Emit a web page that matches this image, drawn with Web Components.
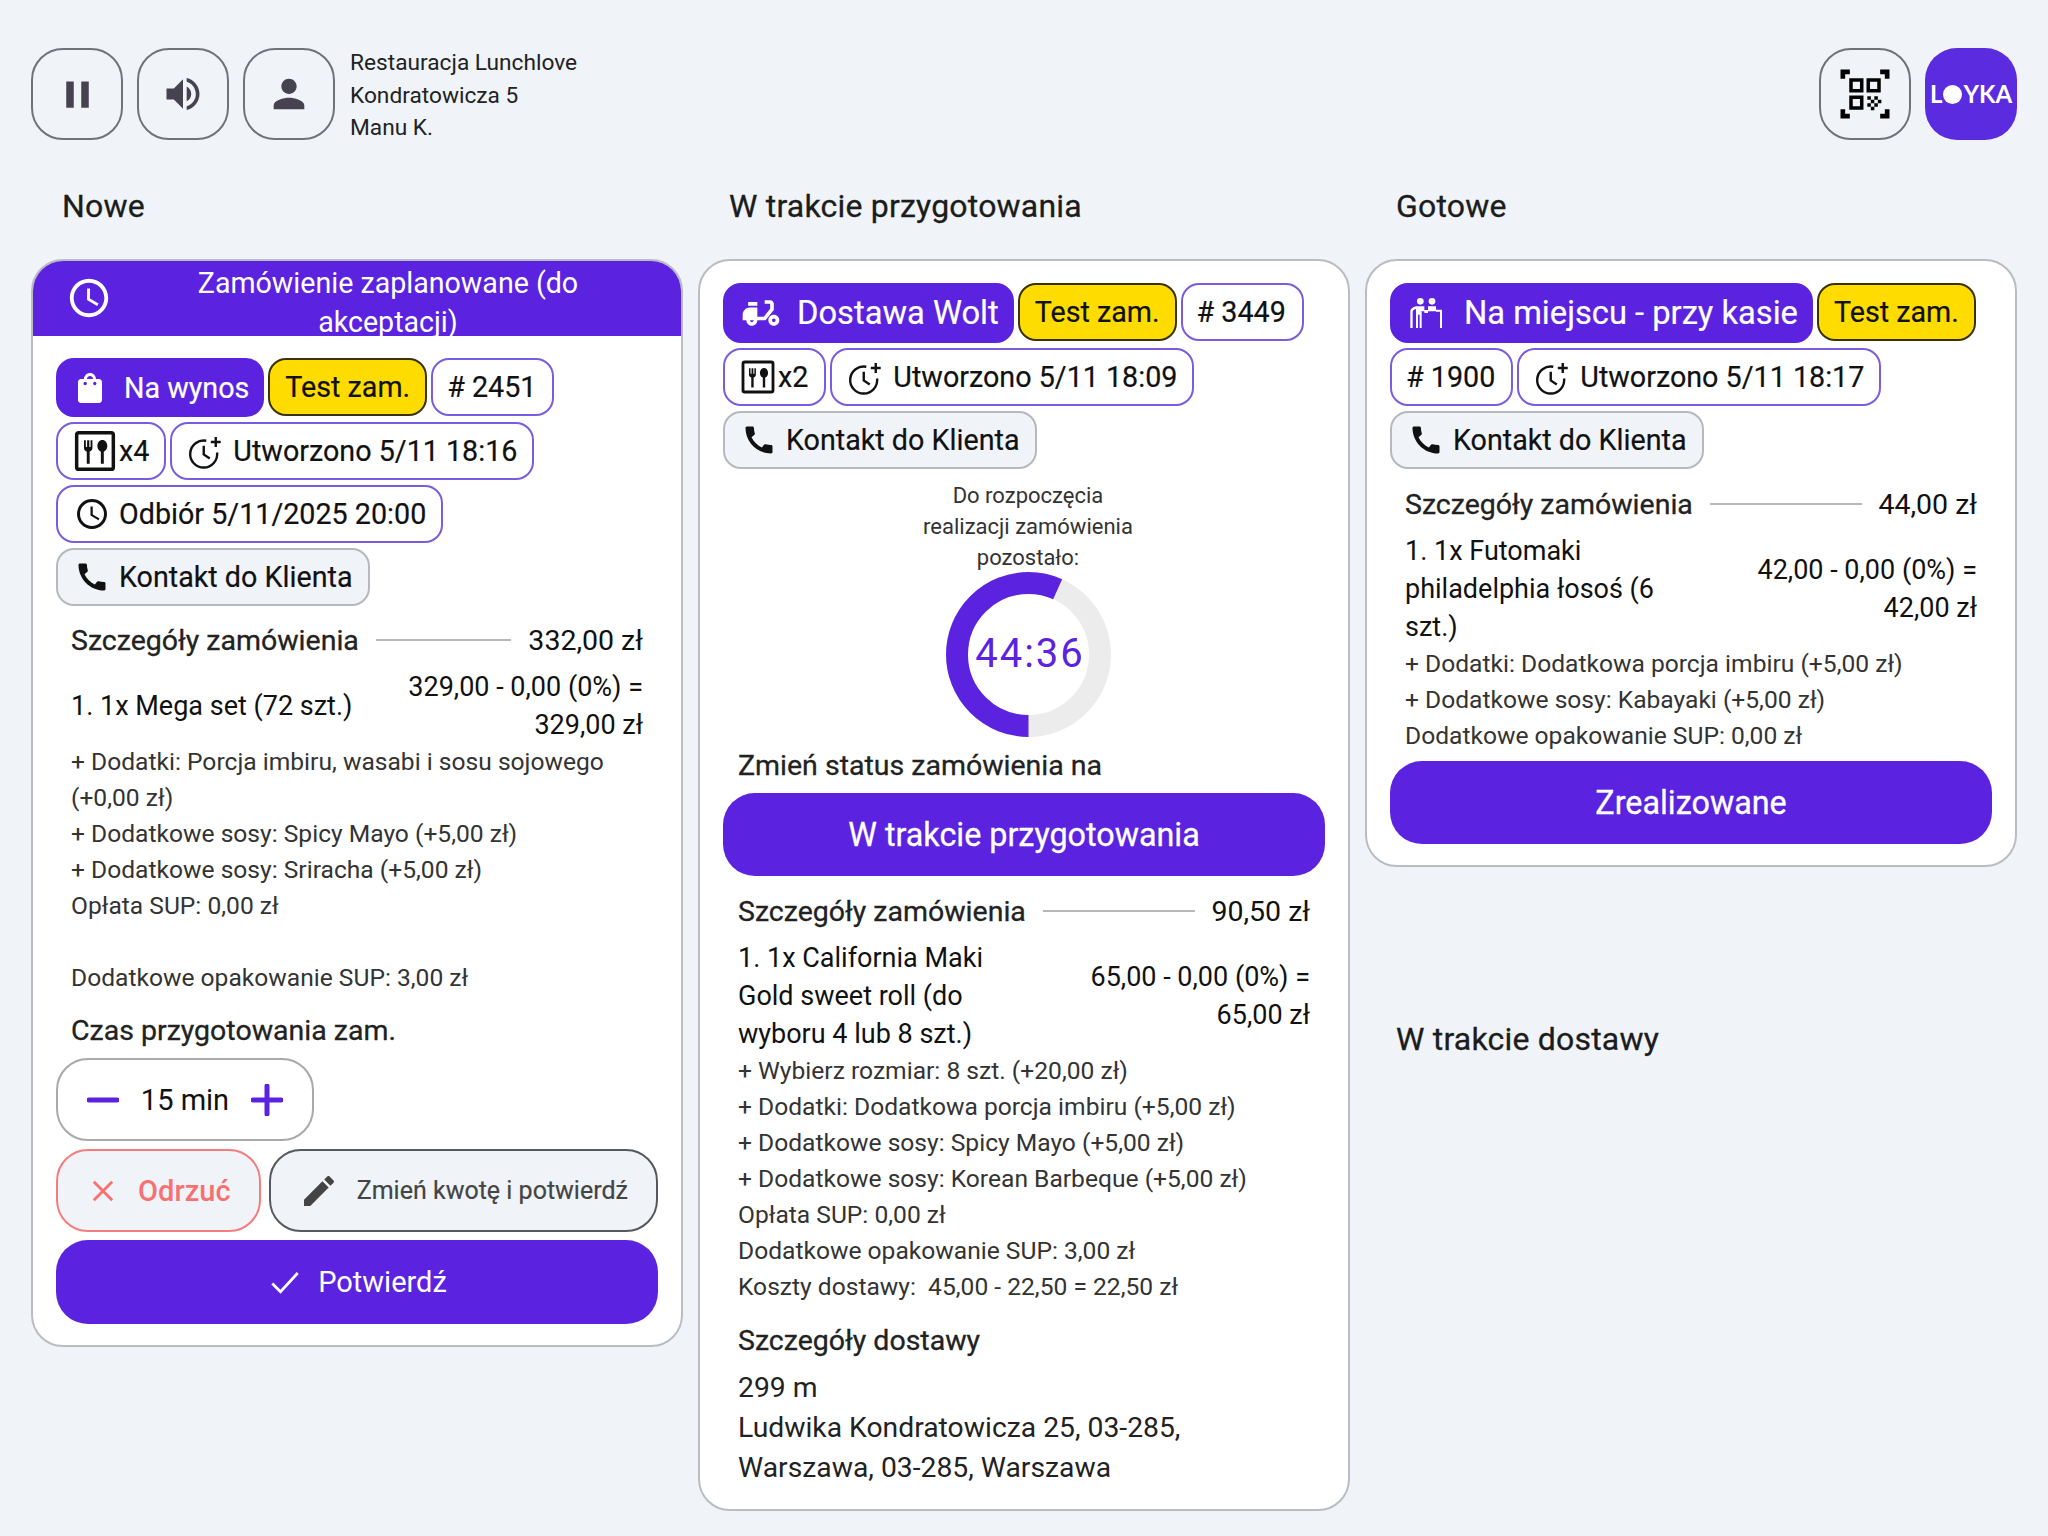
<!DOCTYPE html>
<html lang="pl">
<head>
<meta charset="utf-8">
<title>Zamówienia</title>
<style>
  html, body { margin: 0; background: #f0f4f9; }
  body { font-family: Roboto, "Noto Sans", sans-serif; color: #111; width: 2048px; height: 1536px; overflow: hidden; }
</style>
</head>
<body>
<order-board>
  <top-bar slot="top" lines="Restauracja Lunchlove|Kondratowicza 5|Manu K."></top-bar>

  <board-column slot="col1" title="Nowe">
    <order-card banner="Zamówienie zaplanowane (do akceptacji)">
      <order-badge kind="primary" icon="bag">Na wynos</order-badge>
      <order-badge kind="test">Test zam.</order-badge>
      <order-badge number># 2451</order-badge>
      <order-badge icon="tray" compact>x4</order-badge>
      <order-badge icon="clockplus">Utworzono 5/11 18:16</order-badge>
      <order-badge icon="clock">Odbiór 5/11/2025 20:00</order-badge>
      <order-badge kind="contact" icon="call">Kontakt do Klienta</order-badge>
      <order-details slot="body" total="332,00 zł" rule="135" style="margin-top:14px">
        <order-item name="1. 1x Mega set (72 szt.)" price="329,00 - 0,00 (0%) = 329,00 zł"></order-item>
        <order-note>+ Dodatki: Porcja imbiru, wasabi i sosu sojowego (+0,00 zł)</order-note>
        <order-note>+ Dodatkowe sosy: Spicy Mayo (+5,00 zł)</order-note>
        <order-note>+ Dodatkowe sosy: Sriracha (+5,00 zł)</order-note>
        <order-note>Opłata SUP: 0,00 zł</order-note>
        <order-note gap>Dodatkowe opakowanie SUP: 3,00 zł</order-note>
      </order-details>
      <section-label slot="body" style="margin-top:15px">Czas przygotowania zam.</section-label>
      <time-stepper slot="body" value="15 min"></time-stepper>
      <div slot="body" style="display:flex;gap:8px;margin-top:8px">
        <action-button kind="reject" icon="close" iconsize="34" style="width:205px;gap:18px">Odrzuć</action-button>
        <action-button kind="edit" icon="edit" iconsize="40" style="width:390px">Zmień kwotę i potwierdź</action-button>
      </div>
      <action-button slot="body" kind="main" icon="check" style="margin-top:8px;gap:15px">Potwierdź</action-button>
    </order-card>
  </board-column>

  <board-column slot="col2" title="W trakcie przygotowania">
    <order-card>
      <order-badge kind="primary" icon="moped" wide style="gap:14px">Dostawa Wolt</order-badge>
      <order-badge kind="test">Test zam.</order-badge>
      <order-badge number># 3449</order-badge>
      <order-badge icon="tray" iconsize="36" compact style="padding-right:16px">x2</order-badge>
      <order-badge icon="clockplus">Utworzono 5/11 18:09</order-badge>
      <order-badge kind="contact" icon="call">Kontakt do Klienta</order-badge>
      <count-down slot="body" time="44:36" label="Do rozpoczęcia realizacji zamówienia pozostało:"></count-down>
      <section-label slot="body" style="margin-top:9px">Zmień status zamówienia na</section-label>
      <action-button slot="body" kind="main" strong style="margin-top:7px">W trakcie przygotowania</action-button>
      <order-details slot="body" total="90,50 zł" rule="152" style="margin-top:15px">
        <order-item name="1. 1x California Maki Gold sweet roll (do wyboru 4 lub 8 szt.)" price="65,00 - 0,00 (0%) = 65,00 zł"></order-item>
        <order-note>+ Wybierz rozmiar: 8 szt. (+20,00 zł)</order-note>
        <order-note>+ Dodatki: Dodatkowa porcja imbiru (+5,00 zł)</order-note>
        <order-note>+ Dodatkowe sosy: Spicy Mayo (+5,00 zł)</order-note>
        <order-note>+ Dodatkowe sosy: Korean Barbeque (+5,00 zł)</order-note>
        <order-note>Opłata SUP: 0,00 zł</order-note>
        <order-note>Dodatkowe opakowanie SUP: 3,00 zł</order-note>
        <order-note>Koszty dostawy:&nbsp; 45,00 - 22,50 = 22,50 zł</order-note>
      </order-details>
      <section-label slot="body" style="margin-top:16px">Szczegóły dostawy</section-label>
      <delivery-info slot="body">299 m<br>Ludwika Kondratowicza 25, 03-285,<br>Warszawa, 03-285, Warszawa</delivery-info>
    </order-card>
  </board-column>

  <board-column slot="col3" title="Gotowe">
    <order-card>
      <order-badge kind="primary" icon="people" wide>Na miejscu - przy kasie</order-badge>
      <order-badge kind="test">Test zam.</order-badge>
      <order-badge number># 1900</order-badge>
      <order-badge icon="clockplus">Utworzono 5/11 18:17</order-badge>
      <order-badge kind="contact" icon="call">Kontakt do Klienta</order-badge>
      <order-details slot="body" total="44,00 zł" rule="152" style="margin-top:15px">
        <order-item name="1. 1x Futomaki philadelphia łosoś (6 szt.)" price="42,00 - 0,00 (0%) = 42,00 zł"></order-item>
        <order-note>+ Dodatki: Dodatkowa porcja imbiru (+5,00 zł)</order-note>
        <order-note>+ Dodatkowe sosy: Kabayaki (+5,00 zł)</order-note>
        <order-note>Dodatkowe opakowanie SUP: 0,00 zł</order-note>
      </order-details>
      <action-button slot="body" kind="main" strong style="margin-top:7px">Zrealizowane</action-button>
    </order-card>
    <column-title style="margin-top:152px">W trakcie dostawy</column-title>
  </board-column>
</order-board>

<script>
// material style paths, 24x24 box
var ICONS = {
  pause: '<path d="M6 19h4V5H6v14zm8-14v14h4V5h-4z"/>',
  sound: '<path d="M3 9v6h4l5 5V4L7 9H3zm13.5 3c0-1.77-1.02-3.29-2.5-4.03v8.05c1.48-.73 2.5-2.25 2.5-4.02z"/><path d="M14 3.23v2.06c2.89.86 5 3.54 5 6.71s-2.11 5.85-5 6.71v2.06c4.01-.91 7-4.49 7-8.77s-2.99-7.86-7-8.77z"/>',
  person: '<path d="M12 12c2.21 0 4-1.79 4-4s-1.79-4-4-4-4 1.79-4 4 1.79 4 4 4zm0 2c-2.67 0-8 1.34-8 4v2h16v-2c0-2.66-5.33-4-8-4z"/>',
  call: '<path d="M20.01 15.38c-1.23 0-2.42-.2-3.53-.56a.977.977 0 00-1.01.24l-1.57 1.97c-2.83-1.35-5.48-3.9-6.89-6.83l1.95-1.66c.27-.28.35-.67.24-1.02-.37-1.11-.56-2.3-.56-3.53 0-.54-.45-.99-.99-.99H4.19C3.65 3 3 3.24 3 3.99 3 13.28 10.73 21 20.01 21c.71 0 .99-.63.99-1.18v-3.45c0-.54-.45-.99-.99-.99z"/>',
  clock: '<path d="M11.99 2C6.47 2 2 6.48 2 12s4.47 10 9.99 10C17.52 22 22 17.52 22 12S17.52 2 11.99 2zM12 20c-4.42 0-8-3.58-8-8s3.58-8 8-8 8 3.58 8 8-3.58 8-8 8z"/><path d="M12.5 7H11v6l5.25 3.15.75-1.23-4.5-2.67z"/>',
  clockplus: '<g fill="none" stroke="currentColor" stroke-width="1.6"><path d="M12.2 5.200A9 9 0 1 0 19.400 13"/><path d="M10.500 8.500V14.300l4 2.700"/><path d="M18.500 2.700v6.600M15.200 6h6.600"/></g>',
  edit: '<path d="M3 17.25V21h3.75L17.81 9.94l-3.75-3.75L3 17.25zM20.71 7.04c.39-.39.39-1.02 0-1.41l-2.34-2.34c-.39-.39-1.02-.39-1.41 0l-1.83 1.83 3.75 3.75 1.83-1.83z"/>',
  close: '<path d="M5.500 5.500l13 13M18.500 5.500l-13 13" fill="none" stroke="currentColor" stroke-width="2"/>',
  check: '<path d="M3.500 13l5.500 5.500L20.500 6" fill="none" stroke="currentColor" stroke-width="1.8"/>',
  bag: '<path d="M18 6h-2c0-2.21-1.79-4-4-4S8 3.79 8 6H6c-1.1 0-2 .9-2 2v12c0 1.1.9 2 2 2h12c1.1 0 2-.9 2-2V8c0-1.1-.9-2-2-2zm-6-2c1.1 0 2 .9 2 2h-4c0-1.1.9-2 2-2z"/><circle cx="8.800" cy="9" r="1.100" fill="#5b23e0"/><circle cx="15.200" cy="9" r="1.100" fill="#5b23e0"/>',
  moped: '<path d="M19 7c0-1.1-.9-2-2-2h-3v2h3v2.65L13.52 14H10V9H6c-2.21 0-4 1.79-4 4v3h2c0 1.66 1.34 3 3 3s3-1.34 3-3h4.48L19 10.35V7zM7 17c-.55 0-1-.45-1-1h2c0 .55-.45 1-1 1z"/><path d="M5 6h5v2H5z"/><path d="M19 13c-1.66 0-3 1.34-3 3s1.34 3 3 3 3-1.34 3-3-1.34-3-3-3zm0 4c-.55 0-1-.45-1-1s.45-1 1-1 1 .45 1 1-.45 1-1 1z"/>',
  people: '<circle cx="8.600" cy="5" r="2"/><circle cx="15.600" cy="5" r="2"/><path d="M6 8h5v2.200h2.200V8H18v3h-4.800v1H11v-1H6z"/><path d="M6 8v13h1.200v-8h1v8h1.200V11h-1z"/><path d="M2.600 11.400c0-1.700.9-2.600 3.400-3.400v1.600c-1.400.4-2 .9-2 1.800V21H2.600zM18 10h3.600v11h-1.200V11.200H18z"/>',
  tray: '<rect x="2" y="2" width="20" height="20" rx="1.200" fill="none" stroke="currentColor" stroke-width="1.900"/><path d="M6 6.200v4.200c0 1 .6 1.700 1.500 1.900V19h1.600v-6.700c.9-.2 1.500-.9 1.500-1.900V6.200H9.600v3.600h-.7V6.200H7.700v3.600H7V6.200z"/><path d="M16 6c-1.600 0-2.700 1.500-2.700 3.300 0 1.500.8 2.700 1.900 3.100V19h1.600v-6.600c1.100-.4 1.900-1.600 1.900-3.100C18.700 7.500 17.600 6 16 6z"/>',
  qr: '<g fill="none" stroke="currentColor" stroke-width="1.500"><path d="M5.500 2.500h-3v3M18.500 2.500h3v3M5.500 21.500h-3v-3M18.500 21.500h3v-3" stroke-width="2"/><rect x="6" y="6" width="4.600" height="4.600"/><rect x="13.400" y="6" width="4.600" height="4.600"/><rect x="6" y="13.400" width="4.600" height="4.600"/></g><path d="M13 13h1.500v1.500H13zM16 13h1.500v1.500H16zM14.500 14.500H16V16h-1.500zM17.500 14.500H19V16h-1.500zM13 16h1.500v1.500H13zM16 16h1.500v1.500H16zM14.500 17.500H16V19h-1.500z"/>'
};

class AppIcon extends HTMLElement {
  connectedCallback(){
    var size = this.getAttribute("size") || 36;
    if(!this.shadowRoot) this.attachShadow({mode:"open"});
    this.shadowRoot.innerHTML = `
      <style>:host{display:inline-flex;flex:none;width:${size}px;height:${size}px} svg{width:100%;height:100%;fill:currentColor;display:block}</style>
      <svg viewBox="0 0 24 24">${ICONS[this.getAttribute("name")] || ""}</svg>`;
  }
}
customElements.define("app-icon", AppIcon);

var board_tpl = document.createElement("template");
board_tpl.innerHTML = `
  <style>
    :host{display:block;padding:48px 31px 0 31px}
    .cols{display:grid;grid-template-columns:652px 652px 652px;column-gap:15px;margin-top:46px}
  </style>
  <slot name="top"></slot>
  <div class="cols"><slot name="col1"></slot><slot name="col2"></slot><slot name="col3"></slot></div>`;
class OrderBoard extends HTMLElement {
  constructor(){ super(); this.attachShadow({mode:"open"}); this.shadowRoot.appendChild(board_tpl.content.cloneNode(true)); }
}
customElements.define("order-board", OrderBoard);

class IconButton extends HTMLElement {
  constructor(){ super(); this.attachShadow({mode:"open"});
    this.shadowRoot.innerHTML = `
      <style>:host{display:flex;align-items:center;justify-content:center;box-sizing:border-box;width:92px;height:92px;border:2px solid #6f7378;border-radius:32px;color:#47424f}</style>
      <slot></slot>`;
  }
}
customElements.define("icon-button", IconButton);

class TopBar extends HTMLElement {
  connectedCallback(){
    this.attachShadow({mode:"open"});
    var lines = this.getAttribute("lines").split("|").map(l => `<div>${l}</div>`).join("");
    this.shadowRoot.innerHTML = `
      <style>
        :host{display:flex;align-items:center;gap:14px;height:92px}
        .info{font-size:22.700px;line-height:32.500px;color:#222;margin-left:1px;padding-top:4px}
        .right{margin-left:auto;display:flex;gap:14px}
        .qr{color:#000}
        .logo{width:92px;height:92px;border-radius:32px;background:#5b2be0;color:#fff;display:flex;align-items:center;justify-content:center;font:700 24px/1 Lato,Roboto,sans-serif;white-space:pre}
        .o{display:inline-block;width:19px;height:19px;line-height:19px;border-radius:50%;background:#fff;color:#fff;overflow:hidden;font-size:15px;text-align:center;margin:0 1px}
      </style>
      <icon-button><app-icon name="pause" size="45"></app-icon></icon-button>
      <icon-button><app-icon name="sound" size="44"></app-icon></icon-button>
      <icon-button><app-icon name="person" size="46"></app-icon></icon-button>
      <div class="info">${lines}</div>
      <div class="right">
        <icon-button class="qr"><app-icon name="qr" size="56"></app-icon></icon-button>
        <div class="logo">L<span class="o">O</span>YKA</div>
      </div>`;
  }
}
customElements.define("top-bar", TopBar);

class ColumnTitle extends HTMLElement {
  constructor(){ super(); this.attachShadow({mode:"open"});
    this.shadowRoot.innerHTML = `
      <style>:host{display:block;height:40px;line-height:40px;font-size:32px;font-weight:400;letter-spacing:.2px;color:#1c1c1c;padding-left:31px;margin-bottom:33px;-webkit-text-stroke:.3px #1c1c1c}</style>
      <slot></slot>`;
  }
}
customElements.define("column-title", ColumnTitle);

class BoardColumn extends HTMLElement {
  connectedCallback(){
    this.attachShadow({mode:"open"});
    this.shadowRoot.innerHTML = `
      <style>:host{display:block}</style>
      <column-title>${this.getAttribute("title")}</column-title>
      <slot></slot>`;
  }
}
customElements.define("board-column", BoardColumn);

class OrderCard extends HTMLElement {
  connectedCallback(){
    this.attachShadow({mode:"open"});
    var banner = this.getAttribute("banner");
    this.shadowRoot.innerHTML = `
      <style>
        :host{display:block;box-sizing:border-box;background:#fff;border:2px solid #b9bcc0;border-radius:32px;overflow:hidden}
        .banner{display:flex;align-items:flex-start;height:76px;overflow:hidden;background:#5b23e0;color:#fff;padding-left:34px;margin-top:-1px;margin-left:-1px;margin-right:-1px;box-sizing:border-box}
        .banner app-icon{margin-top:15px}
        .banner div{width:460px;margin-left:46px;margin-top:4px;text-align:center;font-size:28.600px;line-height:39px}
        .inner{padding:22px 23px 21px 23px}
        .badges{display:flex;flex-wrap:wrap;gap:5px 4px}
      </style>
      ${banner ? `<div class="banner"><app-icon name="clock" size="46"></app-icon><div>${banner}</div></div>` : ""}
      <div class="inner">
        <div class="badges"><slot></slot></div>
        <slot name="body"></slot>
      </div>`;
  }
}
customElements.define("order-card", OrderCard);

var badge_tpl = document.createElement("template");
badge_tpl.innerHTML = `
  <style>
    :host{display:inline-flex;align-items:center;box-sizing:border-box;height:58px;padding:0 15px 0 16px;gap:9px;border:2px solid #7a5ce0;border-radius:18px;background:#fff;font-size:28.700px;color:#111;white-space:nowrap;-webkit-text-stroke:.2px currentColor}
    :host([kind=primary]){background:#5b23e0;border-color:#5b23e0;color:#fff;gap:16px;padding:0 13px 0 14px;height:59px}
    :host([kind=primary][wide]){font-size:32.700px;height:60px;gap:18px}
    :host([kind=test]){background:#ffdc00;border-color:#3a3206;padding:0 15px}
    :host([kind=contact]){background:#f0f4f9;border-color:#b5b8bc}
    :host([compact]){gap:2px;padding:0 15px 0 15px}
    :host([number]){padding:0 16px 0 14px}
  </style>
  <app-icon></app-icon><slot></slot>`;
class OrderBadge extends HTMLElement {
  constructor(){ super(); this.attachShadow({mode:"open"}); this.shadowRoot.appendChild(badge_tpl.content.cloneNode(true)); }
  connectedCallback(){
    var ic = this.shadowRoot.querySelector("app-icon");
    var name = this.getAttribute("icon");
    if(!name){ ic.remove(); return; }
    ic.setAttribute("name", name);
    var size = this.getAttribute("iconsize") || (name == "moped" ? 44 : name == "tray" ? 44 : name == "people" ? 40 : 36);
    ic.setAttribute("size", size);
    ic.connectedCallback();
  }
}
customElements.define("order-badge", OrderBadge);

class OrderDetails extends HTMLElement {
  connectedCallback(){
    this.attachShadow({mode:"open"});
    this.shadowRoot.innerHTML = `
      <style>
        :host{display:block;padding:0 15px;margin-top:16px}
        .head{display:flex;align-items:center;height:40px;font-size:28.500px;color:#222;font-weight:400}
        .head span:first-child{-webkit-text-stroke:.3px #222}
        .rule{height:2px;background:#b8b8b8;width:${this.getAttribute("rule")}px;margin:0 auto}
        .total{color:#111}
      </style>
      <div class="head"><span>Szczegóły zamówienia</span><span class="rule"></span><span class="total">${this.getAttribute("total")}</span></div>
      <slot></slot>`;
  }
}
customElements.define("order-details", OrderDetails);

class OrderItem extends HTMLElement {
  connectedCallback(){
    this.attachShadow({mode:"open"});
    this.shadowRoot.innerHTML = `
      <style>
        :host{display:flex;align-items:center;font-size:27px;line-height:38px;color:#111;margin-top:8px}
        div{flex:0 0 50%}
        .p{text-align:right}
      </style>
      <div>${this.getAttribute("name")}</div><div class="p">${this.getAttribute("price")}</div>`;
  }
}
customElements.define("order-item", OrderItem);

class OrderNote extends HTMLElement {
  constructor(){ super(); this.attachShadow({mode:"open"});
    this.shadowRoot.innerHTML = `
      <style>:host{display:block;font-size:24.600px;line-height:36px;color:#333}:host([gap]){margin-top:36px}</style>
      <slot></slot>`;
  }
}
customElements.define("order-note", OrderNote);

class SectionLabel extends HTMLElement {
  constructor(){ super(); this.attachShadow({mode:"open"});
    this.shadowRoot.innerHTML = `
      <style>:host{display:block;padding:0 15px;font-size:28.500px;line-height:40px;font-weight:400;color:#222;-webkit-text-stroke:.3px #222}</style>
      <slot></slot>`;
  }
}
customElements.define("section-label", SectionLabel);

class TimeStepper extends HTMLElement {
  connectedCallback(){
    this.attachShadow({mode:"open"});
    this.shadowRoot.innerHTML = `
      <style>
        :host{display:flex;align-items:center;justify-content:space-between;box-sizing:border-box;width:258px;height:83px;margin-top:7px;padding:0 29px;border:2px solid #a9a9a9;border-radius:32px;font-size:29px;color:#111}
        svg{width:32px;height:32px;stroke:#5b23e0;stroke-width:5;stroke-linecap:round}
      </style>
      <svg viewBox="0 0 32 32"><path d="M2 16h28"/></svg>
      <span>${this.getAttribute("value")}</span>
      <svg viewBox="0 0 32 32"><path d="M2 16h28M16 2v28"/></svg>`;
  }
}
customElements.define("time-stepper", TimeStepper);

var action_tpl = document.createElement("template");
action_tpl.innerHTML = `
  <style>
    :host{display:flex;align-items:center;justify-content:center;box-sizing:border-box;height:84px;border-radius:32px;gap:20px;font-size:29px;white-space:nowrap}
    :host([kind=main]){background:#5b23e0;color:#fff}
    :host([strong]){font-size:32.300px;font-weight:400;height:83px;-webkit-text-stroke:.3px #fff}
    :host([kind=reject]){height:83px;background:#f0f4f9;border:2px solid #f57c7c;color:#f87171;font-weight:500}
    :host([kind=edit]){height:83px;background:#f0f4f9;border:2px solid #55585c;color:#444;font-size:25px;font-weight:400;gap:18px;-webkit-text-stroke:.2px #444}
  </style>
  <app-icon></app-icon><slot></slot>`;
class ActionButton extends HTMLElement {
  constructor(){ super(); this.attachShadow({mode:"open"}); this.shadowRoot.appendChild(action_tpl.content.cloneNode(true)); }
  connectedCallback(){
    var ic = this.shadowRoot.querySelector("app-icon");
    var name = this.getAttribute("icon");
    if(!name){ ic.remove(); return; }
    ic.setAttribute("name", name);
    ic.setAttribute("size", this.getAttribute("iconsize") || 36);
    ic.connectedCallback();
  }
}
customElements.define("action-button", ActionButton);

class CountDown extends HTMLElement {
  connectedCallback(){
    this.attachShadow({mode:"open"});
    // ring r=71.5, starts at bottom, runs clockwise up past the top
    var c = 2 * Math.PI * 71.5;
    this.shadowRoot.innerHTML = `
      <style>
        :host{display:flex;flex-direction:column;align-items:center;margin-top:11px;padding-left:8px}
        .label{width:230px;text-align:center;font-size:22px;line-height:31px;color:#333}
        .ring{position:relative;width:165px;height:165px;margin-top:-1px}
        svg{width:100%;height:100%;display:block}
        .time{position:absolute;inset:0 0 2px 4px;display:flex;align-items:center;justify-content:center;font-size:40px;letter-spacing:2px;color:#5b23e0}
      </style>
      <div class="label">${this.getAttribute("label")}</div>
      <div class="ring">
        <svg viewBox="0 0 165 165"><circle cx="82.5" cy="82.5" r="71.5" fill="none" stroke="#ececec" stroke-width="22"/>
        <circle cx="82.5" cy="82.5" r="71.5" fill="none" stroke="#5b23e0" stroke-width="22" stroke-dasharray="${c*0.566} ${c}" transform="rotate(90 82.5 82.5)"/></svg>
        <div class="time">${this.getAttribute("time")}</div>
      </div>`;
  }
}
customElements.define("count-down", CountDown);

class DeliveryInfo extends HTMLElement {
  constructor(){ super(); this.attachShadow({mode:"open"});
    this.shadowRoot.innerHTML = `
      <style>:host{display:block;padding:0 15px;margin-top:7px;font-size:28.300px;line-height:40px;color:#222}</style>
      <slot></slot>`;
  }
}
customElements.define("delivery-info", DeliveryInfo);
</script>
</body>
</html>
